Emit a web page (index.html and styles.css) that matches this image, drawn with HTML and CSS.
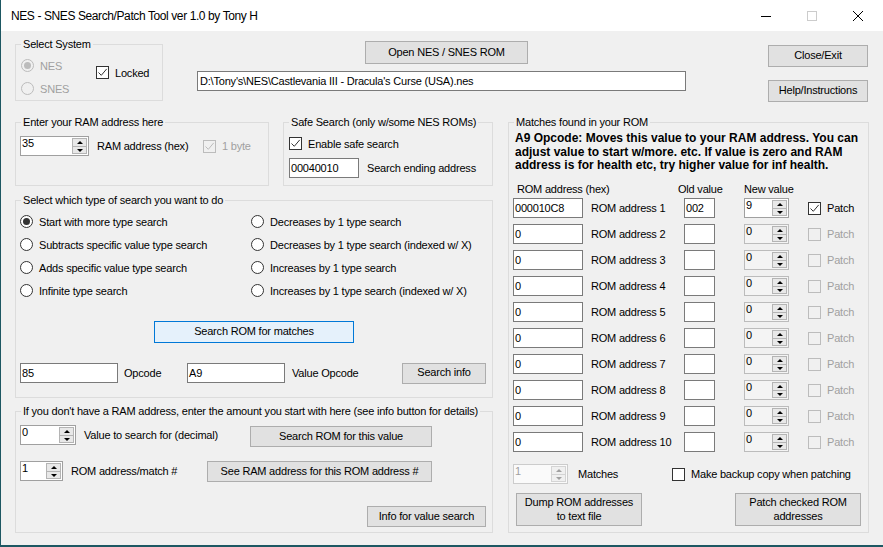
FILE: index.html
```html
<!DOCTYPE html>
<html>
<head>
<meta charset="utf-8">
<title>NES - SNES Search/Patch Tool</title>
<link rel="stylesheet" href="styles.css">
</head>
<body>
<div class="window">

  <div class="titlebar">
    <span class="title">NES - SNES Search/Patch Tool ver 1.0 by Tony H</span>
    <div class="caption">
      <span class="cap"><svg width="10" height="10" viewBox="0 0 10 10"><path d="M0 5.5h10" stroke="#000" stroke-width="1"/></svg></span>
      <span class="cap"><svg width="10" height="10" viewBox="0 0 10 10"><rect x="0.5" y="0.5" width="9" height="9" fill="none" stroke="#cccccc"/></svg></span>
      <span class="cap"><svg width="10" height="10" viewBox="0 0 10 10"><path d="M0 0L10 10M10 0L0 10" stroke="#000" stroke-width="1"/></svg></span>
    </div>
  </div>

  <div class="client">
    <!-- top strip: system, rom path, close/help -->
    <div class="top">
      <div class="group sys-group">
        <span class="group-title">Select System</span>
        <div class="sys-radios">
          <div class="radio off"><span class="dot on"></span>NES</div>
          <div class="radio off"><span class="dot"></span>SNES</div>
        </div>
        <div class="check locked"><span class="box"><svg width="11" height="11" viewBox="0 0 11 11"><path d="M1.5 5.5l2.8 2.8l5.4-6.4" fill="none" stroke="#333" stroke-width="1"/></svg></span>Locked</div>
      </div>
      <div class="rom-col">
        <button class="btn open-btn">Open NES / SNES ROM</button>
        <div class="tb path">D:\Tony's\NES\Castlevania III - Dracula's Curse (USA).nes</div>
      </div>
      <div class="side-col">
        <button class="btn side-btn">Close/Exit</button>
        <button class="btn side-btn help-btn">Help/Instructions</button>
      </div>
    </div>

    <div class="main">
      <div class="left-col">
        <div class="row-groups">
          <div class="group ram-group">
            <span class="group-title">Enter your RAM address here</span>
            <div class="line">
              <div class="num w69"><span class="val">35</span><span class="spin"><i class="up"></i><i class="dn"></i></span></div>
              <span class="lbl w106">RAM address (hex)</span>
              <div class="check off"><span class="box"><svg width="11" height="11" viewBox="0 0 11 11"><path d="M1.5 5.5l2.8 2.8l5.4-6.4" fill="none" stroke="#bcbcbc" stroke-width="1"/></svg></span>1 byte</div>
            </div>
          </div>
          <div class="group safe-group">
            <span class="group-title">Safe Search (only w/some NES ROMs)</span>
            <div class="check"><span class="box"><svg width="11" height="11" viewBox="0 0 11 11"><path d="M1.5 5.5l2.8 2.8l5.4-6.4" fill="none" stroke="#333" stroke-width="1"/></svg></span>Enable safe search</div>
            <div class="line safe-line">
              <div class="tb w70">00040010</div>
              <span class="lbl">Search ending address</span>
            </div>
          </div>
        </div>

        <div class="group type-group">
          <span class="group-title">Select which type of search you want to do</span>
          <div class="radio-grid">
            <div class="radio"><span class="dot on"></span>Start with more type search</div>
            <div class="radio"><span class="dot"></span>Decreases by 1 type search</div>
            <div class="radio"><span class="dot"></span>Subtracts specific value type search</div>
            <div class="radio"><span class="dot"></span>Decreases by 1 type search (indexed w/ X)</div>
            <div class="radio"><span class="dot"></span>Adds specific value type search</div>
            <div class="radio"><span class="dot"></span>Increases by 1 type search</div>
            <div class="radio"><span class="dot"></span>Infinite type search</div>
            <div class="radio"><span class="dot"></span>Increases by 1 type search (indexed w/ X)</div>
          </div>
          <button class="btn focus search-btn">Search ROM for matches</button>
          <div class="line opcode-line">
            <div class="tb w98">85</div>
            <span class="lbl w63">Opcode</span>
            <div class="tb w98">A9</div>
            <span class="lbl w110">Value Opcode</span>
            <button class="btn info-btn">Search info</button>
          </div>
        </div>

        <div class="group value-group">
          <span class="group-title">If you don't have a RAM address, enter the amount you start with here (see info button for details)</span>
          <div class="vrow">
            <div class="num w56"><span class="val">0</span><span class="spin"><i class="up"></i><i class="dn"></i></span></div>
            <span class="lbl w166">Value to search for (decimal)</span>
            <button class="btn value-btn">Search ROM for this value</button>
          </div>
          <div class="vrow vrow2">
            <div class="num w43"><span class="val">1</span><span class="spin"><i class="up"></i><i class="dn"></i></span></div>
            <span class="lbl w136">ROM address/match #</span>
            <button class="btn see-btn">See RAM address for this ROM address #</button>
          </div>
          <button class="btn vinfo-btn">Info for value search</button>
        </div>
      </div>

      <div class="group match-group">
        <span class="group-title">Matches found in your ROM</span>
        <div class="note">A9 Opcode: Moves this value to your RAM address. You can<br>adjust value to start w/more. etc. If value is zero and RAM<br>address is for health etc, try higher value for inf health.</div>
        <div class="heads">
          <span class="h1">ROM address (hex)</span>
          <span class="h2">Old value</span>
          <span>New value</span>
        </div>
        <div class="mrows">
          <div class="mrow">
            <div class="tb w70">000010C8</div>
            <span class="lbl w93">ROM address 1</span>
            <div class="tb w31">002</div>
            <div class="num w45"><span class="val">9</span><span class="spin"><i class="up"></i><i class="dn"></i></span></div>
            <div class="check"><span class="box"><svg width="11" height="11" viewBox="0 0 11 11"><path d="M1.5 5.5l2.8 2.8l5.4-6.4" fill="none" stroke="#333" stroke-width="1"/></svg></span>Patch</div>
          </div>
          <div class="mrow">
            <div class="tb w70">0</div><span class="lbl w93">ROM address 2</span><div class="tb w31"></div>
            <div class="num w45 ro"><span class="val">0</span><span class="spin"><i class="up"></i><i class="dn"></i></span></div>
            <div class="check off"><span class="box"></span>Patch</div>
          </div>
          <div class="mrow">
            <div class="tb w70">0</div><span class="lbl w93">ROM address 3</span><div class="tb w31"></div>
            <div class="num w45 ro"><span class="val">0</span><span class="spin"><i class="up"></i><i class="dn"></i></span></div>
            <div class="check off"><span class="box"></span>Patch</div>
          </div>
          <div class="mrow">
            <div class="tb w70">0</div><span class="lbl w93">ROM address 4</span><div class="tb w31"></div>
            <div class="num w45 ro"><span class="val">0</span><span class="spin"><i class="up"></i><i class="dn"></i></span></div>
            <div class="check off"><span class="box"></span>Patch</div>
          </div>
          <div class="mrow">
            <div class="tb w70">0</div><span class="lbl w93">ROM address 5</span><div class="tb w31"></div>
            <div class="num w45 ro"><span class="val">0</span><span class="spin"><i class="up"></i><i class="dn"></i></span></div>
            <div class="check off"><span class="box"></span>Patch</div>
          </div>
          <div class="mrow">
            <div class="tb w70">0</div><span class="lbl w93">ROM address 6</span><div class="tb w31"></div>
            <div class="num w45 ro"><span class="val">0</span><span class="spin"><i class="up"></i><i class="dn"></i></span></div>
            <div class="check off"><span class="box"></span>Patch</div>
          </div>
          <div class="mrow">
            <div class="tb w70">0</div><span class="lbl w93">ROM address 7</span><div class="tb w31"></div>
            <div class="num w45 ro"><span class="val">0</span><span class="spin"><i class="up"></i><i class="dn"></i></span></div>
            <div class="check off"><span class="box"></span>Patch</div>
          </div>
          <div class="mrow">
            <div class="tb w70">0</div><span class="lbl w93">ROM address 8</span><div class="tb w31"></div>
            <div class="num w45 ro"><span class="val">0</span><span class="spin"><i class="up"></i><i class="dn"></i></span></div>
            <div class="check off"><span class="box"></span>Patch</div>
          </div>
          <div class="mrow">
            <div class="tb w70">0</div><span class="lbl w93">ROM address 9</span><div class="tb w31"></div>
            <div class="num w45 ro"><span class="val">0</span><span class="spin"><i class="up"></i><i class="dn"></i></span></div>
            <div class="check off"><span class="box"></span>Patch</div>
          </div>
          <div class="mrow">
            <div class="tb w70">0</div><span class="lbl w93">ROM address 10</span><div class="tb w31"></div>
            <div class="num w45 ro"><span class="val">0</span><span class="spin"><i class="up"></i><i class="dn"></i></span></div>
            <div class="check off"><span class="box"></span>Patch</div>
          </div>
        </div>
        <div class="line matches-line">
          <div class="num w55 dis"><span class="val">1</span><span class="spin"><i class="up"></i><i class="dn"></i></span></div>
          <span class="lbl w94">Matches</span>
          <div class="check"><span class="box"></span>Make backup copy when patching</div>
        </div>
        <div class="line btn-line">
          <button class="btn big-btn">Dump ROM addresses<br>to text file</button>
          <button class="btn big-btn patch-btn">Patch checked ROM<br>addresses</button>
        </div>
      </div>
    </div>
  </div>
</div>
</body>
</html>
```

FILE: styles.css
```css
body{
    margin: 0;
    font-family: "Liberation Sans", Arial, sans-serif;
    font-size: 11px;
    letter-spacing: -0.2px;
    color: #000;
    background: #f0f0f0;
}

.window{
    width: 883px;
    height: 547px;
    box-sizing: border-box;
    border-left: 1px solid #1d5762;
    border-bottom: 2px solid #1d5762;
    background: #f0f0f0;
    display: flex;
    flex-direction: column;
    overflow: hidden;
}

/* title bar */
.titlebar{
    height: 31px;
    flex-shrink: 0;
    background: #fff;
    display: flex;
    align-items: center;
}
.title{
    margin-left: 10px;
    font-size: 12px;
    letter-spacing: -0.4px;
}
.caption{
    margin-left: auto;
    margin-right: 2px;
    display: flex;
}
.cap{
    width: 46px;
    height: 31px;
    display: flex;
    align-items: center;
    justify-content: center;
}

.client{
    padding-left: 14px;
}

/* group boxes */
.group{
    position: relative;
    box-sizing: border-box;
    border: 1px solid #dcdcdc;
    flex-shrink: 0;
}
.group-title{
    position: absolute;
    top: -7px;
    left: 5px;
    padding: 0 2px;
    line-height: 13px;
    background: #f0f0f0;
    white-space: nowrap;
}

/* controls */
.btn{
    box-sizing: border-box;
    margin: 0;
    padding: 0;
    border: 1px solid #adadad;
    background: #e1e1e1;
    font: inherit;
    letter-spacing: inherit;
    color: #000;
    line-height: 13.5px;
    flex-shrink: 0;
}
.btn.focus{
    background: #e5f1fb;
    border-color: #0078d7;
}
.tb{
    box-sizing: border-box;
    height: 20px;
    border: 1px solid #7a7a7a;
    background: #fff;
    padding: 0 1px;
    line-height: 18px;
    white-space: nowrap;
    overflow: hidden;
    flex-shrink: 0;
}
.num{
    box-sizing: border-box;
    height: 20px;
    border: 1px solid #a0a0a0;
    background: #fff;
    display: flex;
    flex-shrink: 0;
}
.num .val{
    flex: 1;
    padding-left: 1px;
    line-height: 13px;
}
.num.ro{
    background: #f4f4f4;
    border-color: #bcbcbc;
}
.num.dis{
    background: #fafafa;
    border-color: #cccccc;
    color: #a0a0a0;
}
.spin{
    width: 15px;
    margin: 1px 1px 1px 0;
    display: flex;
    flex-direction: column;
}
.spin i{
    flex: 1;
    position: relative;
    background: #e8e8e8;
    border: 1px solid #b4b4b4;
}
.spin i + i{
    border-top: none;
}
.spin i::after{
    content: "";
    position: absolute;
    left: 3.5px;
    top: 2px;
    border-left: 3px solid transparent;
    border-right: 3px solid transparent;
}
.spin .up::after{
    border-bottom: 3px solid #000;
}
.spin .dn::after{
    top: 2px;
    border-top: 3px solid #000;
}
.num.dis .spin i::after{
    border-bottom-color: #a0a0a0;
    border-top-color: #a0a0a0;
}
.num.dis .spin .up::after{ border-top-color: transparent; }
.num.dis .spin .dn::after{ border-bottom-color: transparent; }
.num.dis .spin i{
    border-color: #d4d4d4;
    background: #f0f0f0;
}

.check, .radio{
    display: flex;
    align-items: center;
    white-space: nowrap;
    flex-shrink: 0;
}
.check{
    height: 13px;
}
.box{
    box-sizing: border-box;
    width: 13px;
    height: 13px;
    border: 1px solid #333;
    background: #fff;
    margin-right: 6px;
    flex-shrink: 0;
}
.box svg{
    display: block;
}
.check.off{
    color: #a0a0a0;
}
.check.off .box{
    border-color: #bcbcbc;
    background: #f0f0f0;
}
.dot{
    box-sizing: border-box;
    width: 13px;
    height: 13px;
    border: 1px solid #333;
    border-radius: 50%;
    background: #fff;
    margin-right: 6px;
    display: flex;
    align-items: center;
    justify-content: center;
    flex-shrink: 0;
}
.dot.on::after{
    content: "";
    width: 7px;
    height: 7px;
    border-radius: 50%;
    background: #333;
}
.radio.off{
    color: #a0a0a0;
}
.radio.off .dot{
    border-color: #bcbcbc;
    background: #f0f0f0;
}
.radio.off .dot.on::after{
    background: #bcbcbc;
}

.line{
    display: flex;
    align-items: center;
    height: 20px;
}
.lbl{
    margin-left: 8px;
    white-space: nowrap;
    flex-shrink: 0;
}

.w31{ width: 31px; }
.w43{ width: 43px; }
.w45{ width: 45px; }
.w55{ width: 55px; }
.w56{ width: 56px; }
.w63{ width: 63px; }
.w69{ width: 69px; }
.w70{ width: 70px; }
.w93{ width: 93px; }
.w94{ width: 94px; }
.w98{ width: 98px; }
.w106{ width: 106px; }
.w110{ width: 110px; }
.w136{ width: 136px; }
.w166{ width: 166px; }

/* top strip */
.top{
    height: 91px;
    display: flex;
    align-items: flex-start;
}
.sys-group{
    width: 148px;
    height: 57px;
    margin-top: 13px;
    padding: 9px 0 0 5px;
    display: flex;
    align-items: flex-start;
}
.sys-radios{
    width: 75px;
}
.sys-radios .radio{
    height: 23px;
}
.locked{
    margin-top: 12px;
}
.rom-col{
    margin-left: 34px;
    width: 489px;
    display: flex;
    flex-direction: column;
    align-items: flex-start;
}
.open-btn{
    margin: 10px 0 0 168px;
    width: 163px;
    height: 23px;
}
.path{
    margin-top: 7px;
    width: 489px;
    padding-left: 2px;
}
.side-col{
    margin-left: 82px;
    width: 100px;
    display: flex;
    flex-direction: column;
}
.side-btn{
    margin-top: 14px;
    width: 100px;
    height: 22px;
}
.help-btn{
    margin-top: 13px;
}

/* main area */
.main{
    display: flex;
    align-items: flex-start;
}
.left-col{
    width: 478px;
    display: flex;
    flex-direction: column;
}
.row-groups{
    display: flex;
    gap: 14px;
}
.ram-group{
    width: 254px;
    height: 64px;
    padding: 13px 0 0 4px;
}
.safe-group{
    width: 210px;
    height: 64px;
    padding: 14px 0 0 5px;
}
.safe-line{
    margin-top: 8px;
}
.type-group{
    margin-top: 14px;
    height: 198px;
    padding: 9px 0 0 4px;
}
.radio-grid{
    display: grid;
    grid-template-columns: 231px auto;
    grid-auto-rows: 23px;
}
.search-btn{
    display: block;
    margin: 19px 0 0 134px;
    width: 200px;
    height: 22px;
}
.opcode-line{
    margin-top: 20px;
}
.opcode-line .lbl{
    margin-left: 6px;
}
.opcode-line .lbl.w110{
    margin-left: 7px;
}
.info-btn{
    width: 84px;
    height: 21px;
}

.value-group{
    margin-top: 13px;
    height: 122px;
    padding: 13px 0 0 4px;
}
.vrow{
    display: flex;
    align-items: flex-start;
}
.vrow .lbl{
    line-height: 20px;
}
.value-btn{
    margin-top: 1px;
    width: 182px;
    height: 21px;
}
.vrow2{
    margin-top: 14px;
}
.see-btn{
    width: 225px;
    height: 21px;
}
.vinfo-btn{
    display: block;
    margin: 24px 0 0 347px;
    width: 119px;
    height: 21px;
}

/* matches */
.match-group{
    margin-left: 15px;
    width: 361px;
    height: 411px;
    padding-top: 9px;
}
.note{
    padding-left: 6px;
    font-size: 12px;
    font-weight: bold;
    line-height: 13.5px;
    letter-spacing: 0;
    white-space: nowrap;
}
.heads{
    margin-top: 10px;
    display: flex;
    line-height: 13px;
}
.h1{
    margin-left: 8px;
    width: 161px;
}
.h2{
    width: 66px;
}
.mrows{
    margin-top: 2.5px;
    padding-left: 4px;
    display: flex;
    flex-direction: column;
    gap: 6px;
}
.mrow{
    display: flex;
    align-items: center;
    height: 20px;
}
.mrow .tb.w31{
    margin-right: 29px;
}
.mrow .num{
    margin-right: 19px;
}
.matches-line{
    margin-top: 12px;
    padding-left: 4px;
}
.matches-line .lbl{
    margin-left: 10px;
}
.btn-line{
    margin-top: 9px;
    height: 33px;
    padding-left: 7px;
}
.big-btn{
    width: 126px;
    height: 33px;
}
.patch-btn{
    margin-left: 93px;
}
```
